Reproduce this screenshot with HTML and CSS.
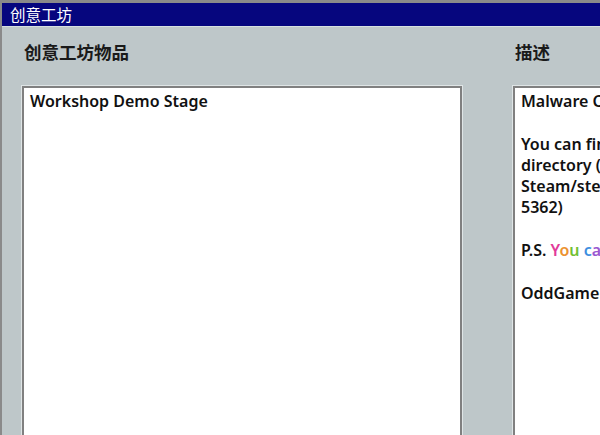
FILE: index.html
```html
<!DOCTYPE html>
<html lang="zh-CN">
<head>
    <meta charset="UTF-8">
    <title>创意工坊</title>
    <link rel="stylesheet" href="styles.css">
</head>
<body>
    <div class="window">
        <div class="titlebar">创意工坊</div>

        <div class="content">
            <section class="column">
                <h2 class="column-title">创意工坊物品</h2>
                <div class="panel">
                    <div class="item">Workshop Demo Stage</div>
                </div>
            </section>

            <section class="column">
                <h2 class="column-title">描述</h2>
                <div class="panel description">
                    <p>Malware Cleaner Workshop Demo</p>
                    <p>You can find the downloaded stage in your workshop<br>
                    directory (e.g. C:/Program Files (x86)/<br>
                    Steam/steamapps/workshop/content/12<br>
                    5362)</p>
                    <p>P.S. <span class="rainbow"><span class="c1">Y</span><span class="c2">o</span><span class="c3">u</span> <span class="c4">c</span><span class="c5">a</span><span class="c1">n</span> <span class="c2">m</span><span class="c3">a</span><span class="c4">k</span><span class="c5">e</span></span> your own!</p>
                    <p>OddGamer</p>
                </div>
            </section>
        </div>
    </div>
</body>
</html>
```

FILE: styles.css
```css
html, body {
    margin: 0;
    padding: 0;
    height: 100%;
    overflow: hidden;
}

body {
    font-family: "Noto Sans", "Noto Sans CJK SC", sans-serif;
    background: #bec7c9;
    color: #111;
}

.window {
    min-height: 100%;
    border-top: 3px solid #8a8a8a;
    border-left: 2px solid #8a8a8a;
    box-sizing: border-box;
    background: #bec7c9;
}

.titlebar {
    background: #06067e;
    color: #fff;
    font-family: "Noto Sans CJK SC", sans-serif;
    font-size: 15.5px;
    height: 23px;
    line-height: 22px;
    padding-left: 8px;
    border-bottom: 1px solid #d6e0e0;
}

.content {
    display: grid;
    grid-template-columns: 440px 440px;
    column-gap: 51px;
    padding: 13px 0 0 20px;
    width: 1000px;
}

.column-title {
    margin: 0 0 22px 2px;
    font-family: "Noto Sans CJK SC", sans-serif;
    font-size: 17.5px;
    font-weight: 700;
    line-height: 24px;
    color: #1a1a1a;
}

.panel {
    background: #fff;
    border: 2px solid #808080;
    box-shadow: 0 0 0 1px #dfe5e6;
    height: 420px;
    padding: 3px 6px;
    font-size: 16px;
    font-weight: 600;
    line-height: 21.3px;
}

.item {
    white-space: nowrap;
}

.description p {
    margin: 0 0 21.3px;
    white-space: nowrap;
}

.c1 { color: #e23a9a; }
.c2 { color: #ec9230; }
.c3 { color: #72c034; }
.c4 { color: #3e8fe0; }
.c5 { color: #9b59d0; }
```
